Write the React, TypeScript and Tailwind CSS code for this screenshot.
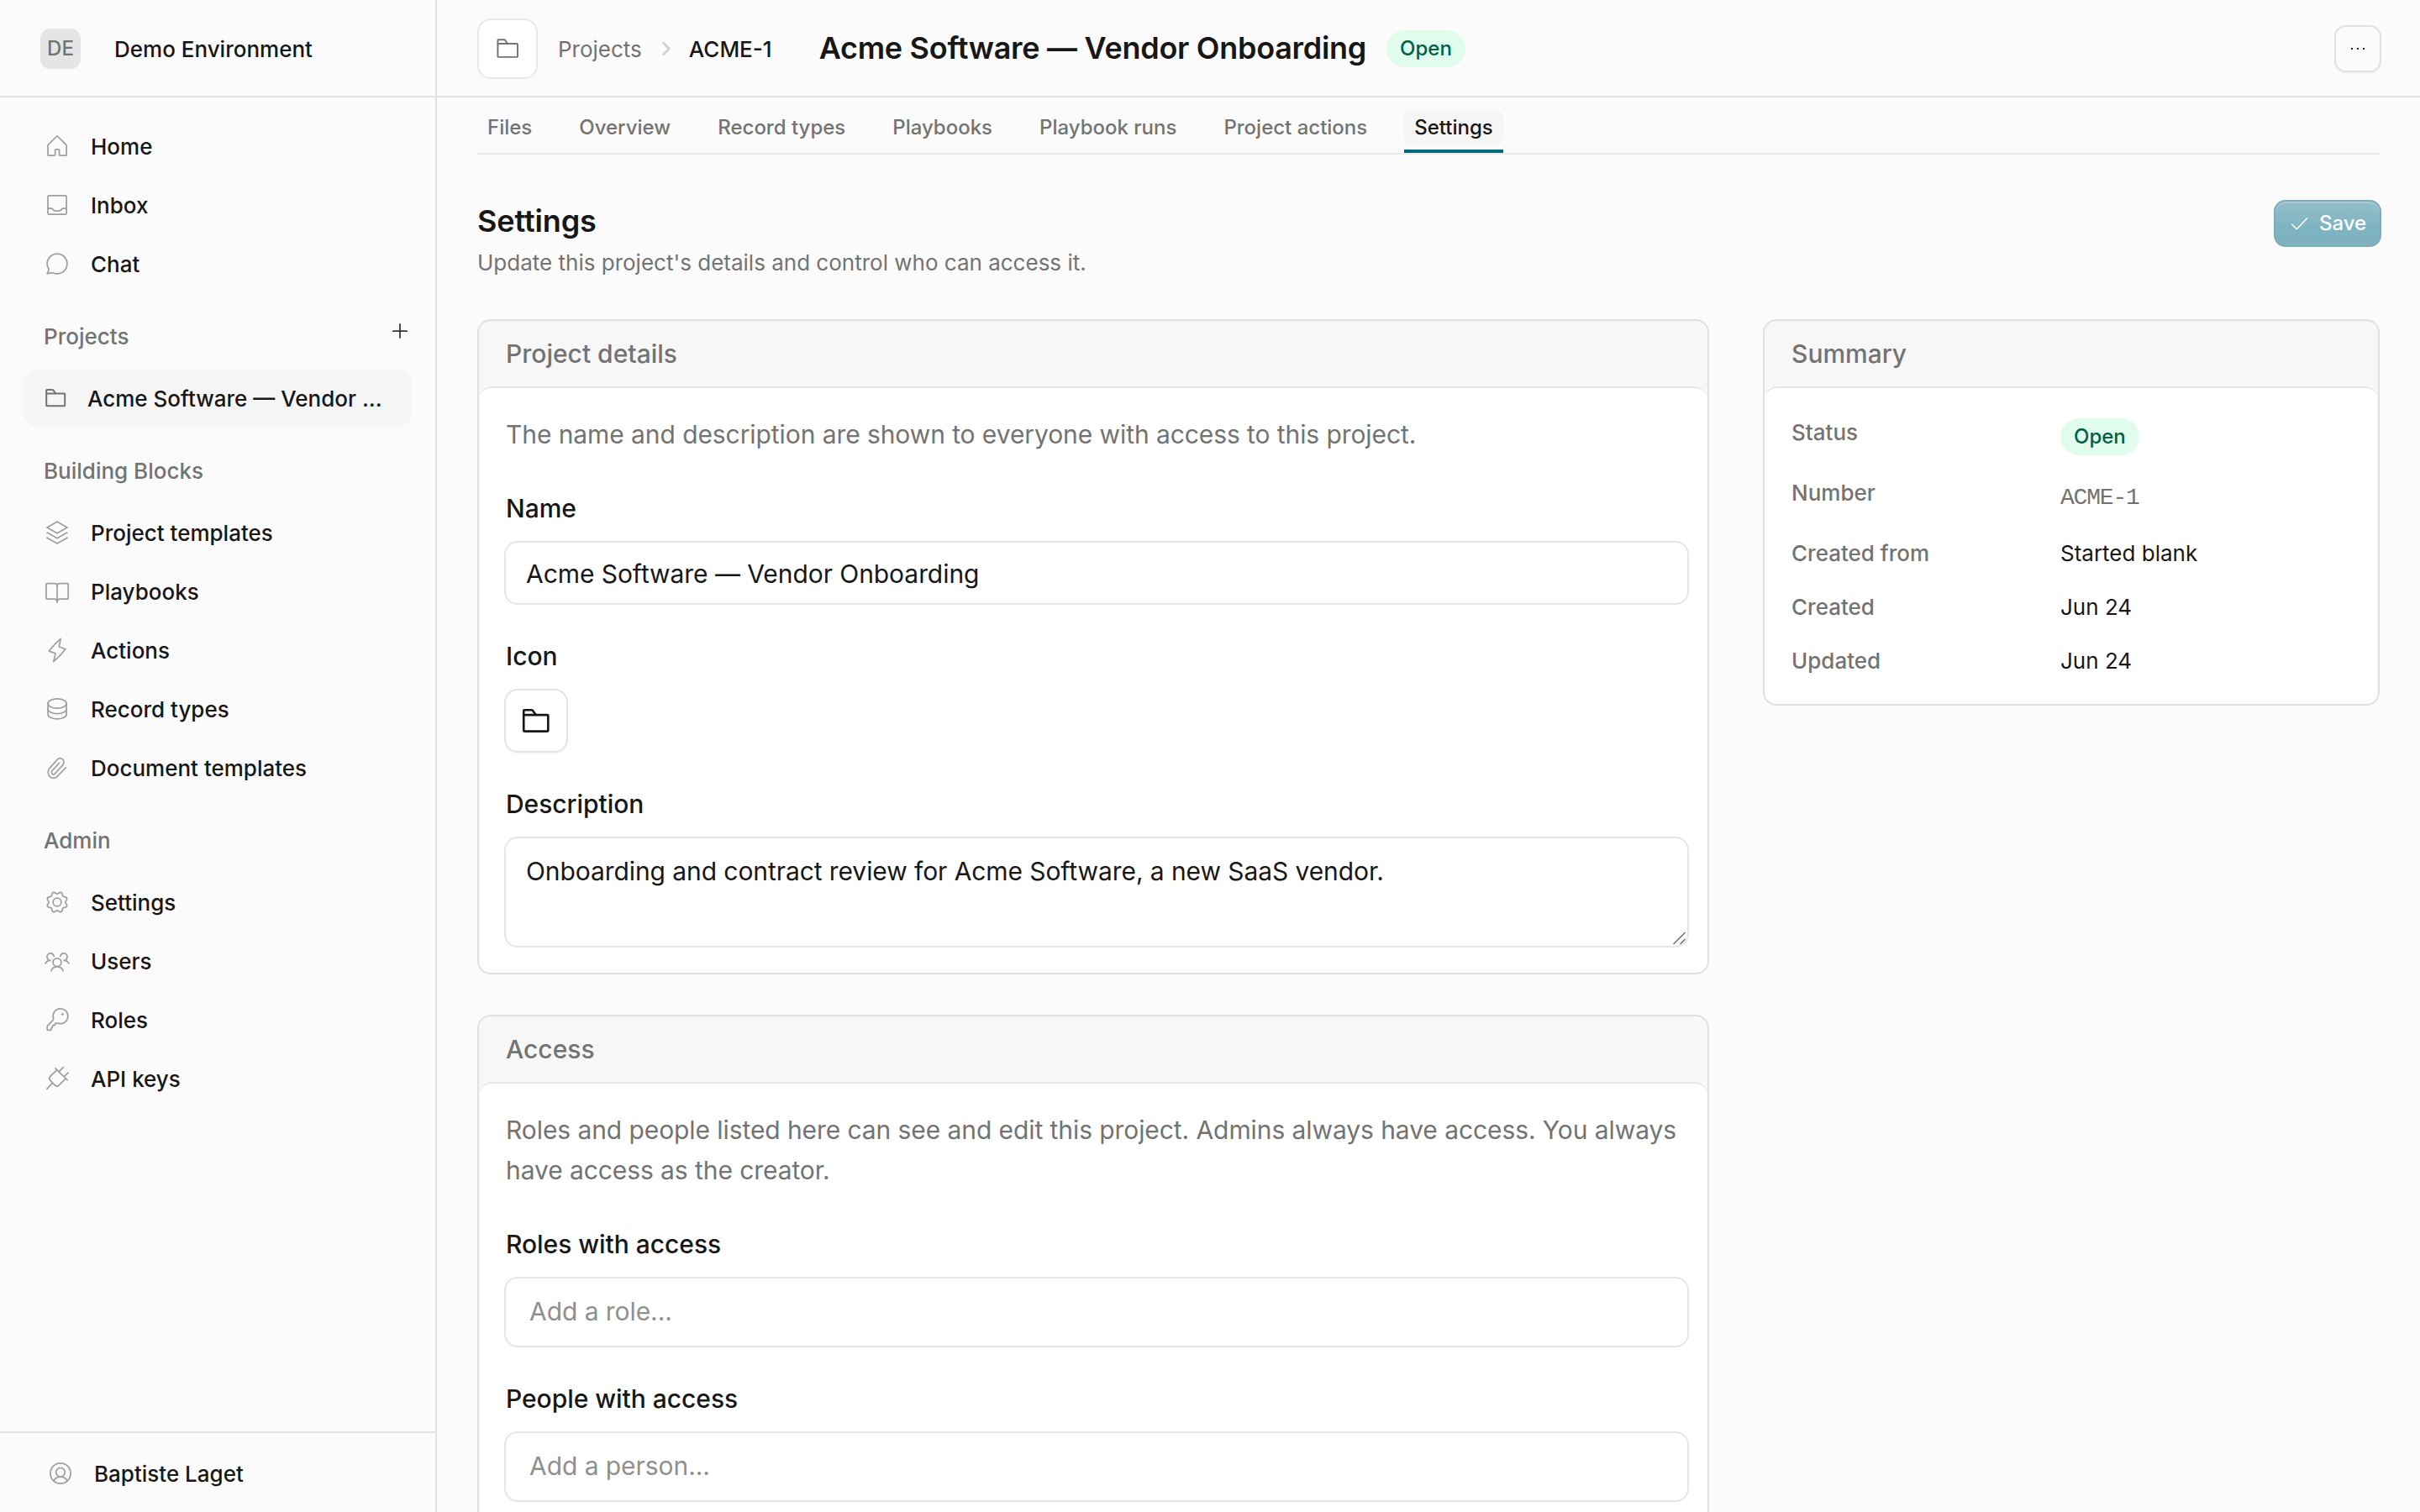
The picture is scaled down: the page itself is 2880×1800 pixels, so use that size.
import type { ReactNode } from "react";

/* ---------- icons ---------- */

function Icon({ children }: { children: ReactNode }) {
  return (
    <svg
      viewBox="0 0 32 32"
      className="size-8 shrink-0"
      fill="none"
      stroke="currentColor"
      strokeWidth="1.75"
      strokeLinecap="round"
      strokeLinejoin="round"
    >
      {children}
    </svg>
  );
}

function Folder({ className, strokeWidth }: { className: string; strokeWidth: number }) {
  return (
    <svg viewBox="0 0 28 28" className={className} fill="none" stroke="currentColor" strokeWidth={strokeWidth} strokeLinejoin="round">
      <path d="M3.2 8.4H24.6a.6.6 0 0 1 .6.6V22.6a.6.6 0 0 1-.6.6H3.8a.6.6 0 0 1-.6-.6Z" />
      <path d="M3.2 9V4.7a.7.7 0 0 1 .7-.7H10.4a1.2 1.2 0 0 1 .9.4L14 8.2" />
    </svg>
  );
}

// Eight-lobed gear outline, sampled around the centre of the 32px box.
const gearOutline =
  Array.from({ length: 144 }, (_, i) => {
    const a = (i / 144) * Math.PI * 2;
    const r = 11.2 + 1.3 * Math.cos(8 * a - Math.PI);
    return `${i === 0 ? "M" : "L"}${(16 + r * Math.cos(a)).toFixed(2)} ${(16 + r * Math.sin(a)).toFixed(2)}`;
  }).join("") + "Z";

const icons = {
  home: (
    <path d="M15.3 4.5a1 1 0 0 1 1.4 0L26.4 14a2 2 0 0 1 .7 1.5V26.2a.8.8 0 0 1-.8.8H19.4a.8.8 0 0 1-.8-.8V20.6a.8.8 0 0 0-.8-.8H14.5a.8.8 0 0 0-.8.8V26.2a.8.8 0 0 1-.8.8H5.8a.8.8 0 0 1-.8-.8V15.5a2 2 0 0 1 .7-1.5Z" />
  ),
  inbox: (
    <>
      <rect x="5" y="4.9" width="22.1" height="22.1" rx="1.2" />
      <path d="M5 20.2H8.8c1 0 1.5.4 2.2 1.2.8 1 1.7 1.6 3 1.6h4.1c1.3 0 2.2-.6 3-1.6.7-.8 1.2-1.2 2.2-1.2H27" />
    </>
  ),
  chat: (
    <path d="M16.1 4.1a11.9 11.9 0 1 1-5.3 22.6C8.8 26.2 6.8 27.8 4.2 27.8 4.4 26 6.6 24.8 6 22.3A11.9 11.9 0 0 1 16.1 4.1Z" />
  ),
  layers: (
    <>
      <path d="M16 3.1 28 10 16 16.8 4 10Z" />
      <path d="M4 16.1 16 22.8 28 16.1" />
      <path d="M4 22.2 16 28.9 28 22.2" />
    </>
  ),
  book: (
    <>
      <path d="M16 10V29" />
      <path d="M16 9.4C16 7.6 14.8 6.6 13 6.6H3.8a.8.8 0 0 0-.8.8V24.2a.8.8 0 0 0 .8.8H13c1.8 0 3 1.2 3 3.4" />
      <path d="M16 9.4C16 7.6 17.2 6.6 19 6.6H28.4a.8.8 0 0 1 .8.8V24.2a.8.8 0 0 1-.8.8H19c-1.8 0-3 1.2-3 3.4" />
    </>
  ),
  bolt: <path d="M20.2 2.4C14.5 7.5 10 12 6.4 17.1L14 19.9 11.8 29.7C17.5 24.8 22 20 25.8 14.8L18.3 12Z" />,
  database: (
    <>
      <ellipse cx="16.1" cy="9.5" rx="11" ry="5.7" />
      <path d="M5.1 9.5V22.2c0 3.2 4.9 5.7 11 5.7s11-2.5 11-5.7V9.5" />
      <path d="M5.1 16c0 3.1 4.9 5.6 11 5.6s11-2.5 11-5.6" />
    </>
  ),
  clip: (
    <path
      transform="translate(2.8 1.6) scale(1.1 1.2)"
      strokeWidth="1.5"
      d="m21.44 11.9-9.19 8.6a5.6 5.6 0 0 1-8.49-7.9l8.57-8.9A4 4 0 1 1 18 9.34l-8.59 8.57a2 2 0 0 1-2.83-2.83l7.6-7.7"
    />
  ),
  gear: (
    <>
      <path d={gearOutline} />
      <circle cx="16" cy="16" r="4.9" />
    </>
  ),
  users: (
    <>
      <circle cx="16" cy="17.7" r="4.9" />
      <path d="M8.9 27.8C10 24.9 12.7 22.9 16 22.9s6 2 7.1 4.9" />
      <path d="M12.2 10.3A4.2 4.2 0 1 0 6 14.7" />
      <path d="M8 15.4C5.3 15.3 3.3 16.6 2.2 18.9" />
      <path d="M19.8 10.3A4.2 4.2 0 1 1 26 14.7" />
      <path d="M24 15.4c2.7-.1 4.7 1.2 5.8 3.5" />
    </>
  ),
  key: (
    <>
      <path d="M11.6 14.7A8.9 8.9 0 1 1 17 20.1H14.6a1 1 0 0 0-1 1V22.2l-2.4.6a1 1 0 0 0-.9 1V25.3l-1.2.7V27.3a1 1 0 0 1-1 1H5.2a1 1 0 0 1-1-1V24.2a1.5 1.5 0 0 1 .4-1L11 16.6a2 2 0 0 0 .6-1.9Z" />
      <circle cx="22.4" cy="9.4" r="1" fill="currentColor" strokeWidth="1" />
    </>
  ),
  plug: (
    <>
      <path d="M13.8 3.9 28.1 17.6" />
      <path d="M15.6 5.9 7.7 13.5a3.3 3.3 0 0 0 0 4.6L13.2 23.8a3.6 3.6 0 0 0 5 0L26.3 15.9" />
      <path d="M10.2 21.5 3.9 28.3" />
      <path d="M18.5 7.6 23.2 2.7M24.7 13.3 29.2 8.9" />
    </>
  ),
  user: (
    <>
      <circle cx="16" cy="16" r="12.1" />
      <circle cx="16" cy="14.7" r="5.3" />
      <path d="M7.9 24.9C9.5 21.8 12.5 20 16 20s6.5 1.8 8.1 4.9" />
    </>
  ),
};

type IconName = keyof typeof icons;

/* ---------- sidebar ---------- */

function NavItem({ icon, label }: { icon: IconName; label: string }) {
  return (
    <a className="flex h-[68px] items-center rounded-2xl pl-6 text-[26px] font-medium text-[#171717]">
      <span className="text-[#a0a0a0]">
        <Icon>{icons[icon]}</Icon>
      </span>
      <span className="ml-6">{label}</span>
    </a>
  );
}

function NavHeading({ label, action }: { label: string; action?: boolean }) {
  return (
    <div className="flex h-[92px] items-center justify-between pt-3 pl-6 pr-0.5 text-[26px] font-medium text-[#737373]">
      <span>{label}</span>
      {action && (
        <svg viewBox="0 0 24 24" className="-mt-3 size-6" stroke="#333" strokeWidth="1.75">
          <path d="M12 3.2V20.8M3.2 12H20.8" />
        </svg>
      )}
    </div>
  );
}

function NavGroup({ items }: { items: [IconName, string][] }) {
  return (
    <div className="flex flex-col gap-0.5">
      {items.map(([icon, label]) => (
        <NavItem key={label} icon={icon} label={label} />
      ))}
    </div>
  );
}

function Sidebar() {
  return (
    <aside className="flex w-[520px] shrink-0 flex-col border-r-2 border-[#e2e2e2]">
      <div className="flex h-[116px] shrink-0 items-center border-b-2 border-[#e2e2e2] pt-0.5 pl-12">
        <div className="flex size-12 items-center justify-center rounded-xl bg-[#e5e5e5] pb-px text-2xl leading-none font-medium text-[#737373]">
          DE
        </div>
        <span className="ml-10 text-[26px] font-medium">Demo Environment</span>
      </div>
      <nav className="flex flex-1 flex-col px-7 pt-6">
        <NavGroup items={[["home", "Home"], ["inbox", "Inbox"], ["chat", "Chat"]]} />
        <NavHeading label="Projects" action />
        <a className="flex h-[68px] items-center rounded-2xl bg-[#f5f5f5] pr-8 pl-6 text-[26px] font-medium">
          <Folder className="size-7 shrink-0 text-[#737373]" strokeWidth={2} />
          <span className="ml-6 whitespace-nowrap">Acme Software — Vendor ...</span>
        </a>
        <NavHeading label="Building Blocks" />
        <NavGroup
          items={[
            ["layers", "Project templates"],
            ["book", "Playbooks"],
            ["bolt", "Actions"],
            ["database", "Record types"],
            ["clip", "Document templates"],
          ]}
        />
        <NavHeading label="Admin" />
        <NavGroup items={[["gear", "Settings"], ["users", "Users"], ["key", "Roles"], ["plug", "API keys"]]} />
      </nav>
      <div className="flex h-24 shrink-0 items-center border-t-2 border-[#e2e2e2] pt-0.5 pl-14 text-[26px] font-medium">
        <span className="text-[#a0a0a0]">
          <Icon>{icons.user}</Icon>
        </span>
        <span className="ml-6">Baptiste Laget</span>
      </div>
    </aside>
  );
}

/* ---------- main ---------- */

function StatusBadge() {
  return (
    <span className="inline-flex h-11 items-center rounded-full bg-[#dffcec] px-4 pb-px text-2xl leading-none font-medium text-[#006045]">
      Open
    </span>
  );
}

function Header() {
  return (
    <header className="flex h-[116px] shrink-0 items-center border-b-2 border-[#e2e2e2] pt-0.5 pr-[46px] pl-12">
      <div className="flex size-[72px] items-center justify-center rounded-2xl border-2 border-[#e8e8e8] bg-white text-[#737373]">
        <Folder className="size-[30px]" strokeWidth={1.8} />
      </div>
      <span className="ml-6 text-[26px] text-[#737373]">Projects</span>
      <svg viewBox="0 0 24 24" className="mx-4 size-6" fill="none" stroke="#cfcfcf" strokeWidth="2.5" strokeLinecap="round" strokeLinejoin="round">
        <path d="m9.5 5.2 6.8 6.8-6.8 6.8" />
      </svg>
      <span className="text-[26px] font-medium">ACME-1</span>
      <h1 className="mr-6 ml-14 -mt-0.5 text-4xl font-semibold tracking-[-0.28px]">Acme Software — Vendor Onboarding</h1>
      <StatusBadge />
      <button className="ml-auto flex size-14 items-center justify-center gap-[5px] rounded-[14px] border-2 border-[#e0e0e0] shadow-[0_2px_2px_rgba(0,0,0,0.04)]">
        <span className="size-0.5 bg-[#222]" />
        <span className="size-0.5 bg-[#222]" />
        <span className="size-0.5 bg-[#222]" />
      </button>
    </header>
  );
}

const tabs = ["Files", "Overview", "Record types", "Playbooks", "Playbook runs", "Project actions"];

function Tabs() {
  return (
    <div className="flex h-[68px] gap-8 border-b-2 border-[#e8e8e8] pt-4 text-2xl leading-10 font-medium text-[#737373]">
      {tabs.map((t) => (
        <span key={t} className="h-10 px-3">
          {t}
        </span>
      ))}
      <span className="border-b-4 border-[#006a83] text-[#171717]">
        <span className="block h-10 rounded-lg bg-[#f5f5f5] px-3">Settings</span>
      </span>
    </div>
  );
}

function Card({ title, className, children }: { title: string; className: string; children: ReactNode }) {
  return (
    <section className="overflow-hidden rounded-2xl border-2 border-[#e0e0e0] bg-[#f7f7f7]">
      <h3 className="pl-8 text-[30px] leading-[78px] font-medium text-[#737373]">{title}</h3>
      <div className={`rounded-t-2xl border-t-2 border-[#e5e5e5] bg-white ${className}`}>{children}</div>
    </section>
  );
}

function Label({ children }: { children: ReactNode }) {
  return <div className="mb-[21px] pl-0.5 text-[30px] leading-9 font-medium tracking-[-0.04px]">{children}</div>;
}

function Intro({ children }: { children: ReactNode }) {
  return <p className="mb-[46px] pl-0.5 text-[30px] leading-[48px] tracking-[-0.08px] text-[#737373]">{children}</p>;
}

function Placeholder({ children }: { children: ReactNode }) {
  return (
    <div className="flex h-[84px] items-center rounded-2xl border-2 border-[#e6e6e6] pb-0.5 pl-7 text-[30px] tracking-[-0.06px] text-[#8f8f8f]">
      {children}
    </div>
  );
}

function SummaryLabel({ children }: { children: ReactNode }) {
  return <dt className="font-medium text-[#737373]">{children}</dt>;
}

export default function App() {
  return (
    <div className="flex h-[1800px] w-[2880px] overflow-hidden bg-[#fbfbfb] font-['Inter',sans-serif] text-[#171717]">
      <Sidebar />
      <main className="flex min-w-0 flex-1 flex-col overflow-hidden">
        <Header />
        <div className="px-12">
          <Tabs />
          <div className="-mr-0.5 flex justify-between pt-[54px]">
            <div>
              <h2 className="text-4xl leading-[50px] font-semibold tracking-[-0.13px]">Settings</h2>
              <p className="mt-[7px] text-[26px] leading-[36px] text-[#737373]">
                Update this project's details and control who can access it.
              </p>
            </div>
            <button className="flex h-14 w-32 items-center rounded-[14px] border-2 border-[#7eabb8] bg-gradient-to-b from-[#96bdc9] via-[#7db4c2] via-60% to-[#80b1bf] pl-[18px] text-2xl font-medium text-white shadow-[inset_0_2px_1px_rgba(255,255,255,0.22)]">
              <svg viewBox="0 0 22 20" className="h-5 w-[22px]" fill="none" stroke="white" strokeWidth="1.5" strokeLinejoin="round">
                <path d="M1.3 10.8 7.3 16.8 20 3.6" />
              </svg>
              <span className="ml-3">Save</span>
            </button>
          </div>

          <div className="mt-[49px] grid grid-cols-[1466px_734px] items-start gap-16">
            <div className="flex min-w-0 flex-col gap-12">
              <Card title="Project details" className="pt-[31px] pr-[22px] pb-[30px] pl-[30px]">
                <Intro>The name and description are shown to everyone with access to this project.</Intro>
                <Label>Name</Label>
                <div className="mb-[43px] flex h-[76px] items-center rounded-2xl border-2 border-[#e6e6e6] pt-0.5 pl-6 text-[30px] tracking-[-0.06px]">
                  Acme Software — Vendor Onboarding
                </div>
                <Label>Icon</Label>
                <div className="mb-[43px] flex size-[76px] items-center justify-center rounded-2xl border-2 border-[#e4e4e4] pr-px shadow-[0_2px_2px_rgba(0,0,0,0.03)]">
                  <Folder className="size-[37px]" strokeWidth={2} />
                </div>
                <Label>Description</Label>
                <div className="relative h-[132px] rounded-2xl border-2 border-[#e6e6e6] pt-[17px] pl-6 text-[30px] leading-[44px] tracking-[-0.08px]">
                  Onboarding and contract review for Acme Software, a new SaaS vendor.
                  <svg viewBox="0 0 16 16" className="absolute right-px bottom-px size-4" stroke="#666" strokeWidth="1.4">
                    <path d="M.5 15 14.5 1M8.5 15 14.5 9" />
                  </svg>
                </div>
              </Card>
              <Card title="Access" className="h-[620px] pt-[31px] pr-[22px] pl-[30px]">
                <Intro>
                  Roles and people listed here can see and edit this project. Admins always have access. You always have
                  access as the creator.
                </Intro>
                <Label>Roles with access</Label>
                <Placeholder>Add a role...</Placeholder>
                <div className="h-[43px]" />
                <Label>People with access</Label>
                <Placeholder>Add a person...</Placeholder>
              </Card>
            </div>

            <Card title="Summary" className="pt-9 pb-[33px] pl-8">
              <dl className="grid grid-cols-[320px_1fr] gap-y-7 text-[26px] leading-9">
                <SummaryLabel>
                  <span className="block leading-[34px]">Status</span>
                </SummaryLabel>
                <dd className="flex h-11">
                  <StatusBadge />
                </dd>
                <SummaryLabel>
                  <span className="block leading-[34px]">Number</span>
                </SummaryLabel>
                <dd className="h-[43px] font-['Liberation_Mono',monospace] text-[28px] leading-[45px] tracking-[-1.2px] text-[#737373]">
                  ACME-1
                </dd>
                <SummaryLabel>Created from</SummaryLabel>
                <dd>Started blank</dd>
                <SummaryLabel>Created</SummaryLabel>
                <dd>Jun 24</dd>
                <SummaryLabel>Updated</SummaryLabel>
                <dd>Jun 24</dd>
              </dl>
            </Card>
          </div>
        </div>
      </main>
    </div>
  );
}
